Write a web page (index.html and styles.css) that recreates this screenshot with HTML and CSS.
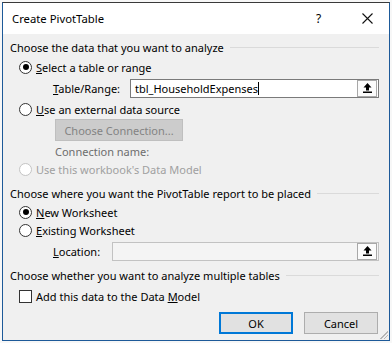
FILE: index.html
```html
<!DOCTYPE html>
<html lang="en">
<head>
    <meta charset="UTF-8">
    <title>Create PivotTable</title>
    <link rel="stylesheet" href="styles.css">
</head>
<body>
    <div class="dialog">
        <div class="title-bar">
            <span class="title">Create PivotTable</span>
            <span class="help">?</span>
            <span class="close">
                <svg width="11" height="11" viewBox="0 0 11 11"><path d="M0.5 0.5 L10.5 10.5 M10.5 0.5 L0.5 10.5" stroke="#111" stroke-width="1.1" fill="none"/></svg>
            </span>
        </div>
        <div class="dialog-body">
            <div class="section-head head-1"><span>Choose the data that you want to analyze</span><i class="rule"></i></div>

            <label class="option row-select">
                <span class="radio checked"></span>
                <span><u>S</u>elect a table or range</span>
            </label>
            <div class="field row-range">
                <span class="field-label"><u>T</u>able/Range:</span>
                <div class="ref-box">
                    <span class="ref-text">tbl_HouseholdExpenses</span><span class="caret"></span>
                    <span class="ref-btn">
                        <svg width="9" height="10" viewBox="0 0 9 10"><path d="M4.5 0 L0.5 4.5 H3 V7.5 H6 V4.5 H8.5 Z" fill="#000"/><rect x="0" y="8.5" width="9" height="1.5" fill="#000"/></svg>
                    </span>
                </div>
            </div>

            <label class="option row-external">
                <span class="radio"></span>
                <span><u>U</u>se an external data source</span>
            </label>
            <div class="indent">
                <button class="btn-disabled" type="button">Choose Connection...</button>
            </div>
            <div class="indent conn-name">Connection name:</div>
            <label class="option row-model disabled">
                <span class="radio"></span>
                <span>Use this workbook's Data Model</span>
            </label>

            <div class="section-head head-2"><span>Choose where you want the PivotTable report to be placed</span><i class="rule"></i></div>
            <label class="option row-new">
                <span class="radio checked"></span>
                <span><u>N</u>ew Worksheet</span>
            </label>
            <label class="option row-existing">
                <span class="radio"></span>
                <span><u>E</u>xisting Worksheet</span>
            </label>
            <div class="field row-location">
                <span class="field-label"><u>L</u>ocation:</span>
                <div class="ref-box inactive">
                    <span class="ref-text"></span>
                    <span class="ref-btn">
                        <svg width="9" height="10" viewBox="0 0 9 10"><path d="M4.5 0 L0.5 4.5 H3 V7.5 H6 V4.5 H8.5 Z" fill="#000"/><rect x="0" y="8.5" width="9" height="1.5" fill="#000"/></svg>
                    </span>
                </div>
            </div>

            <div class="section-head head-3"><span>Choose whether you want to analyze multiple tables</span><i class="rule"></i></div>
            <label class="option row-check">
                <span class="checkbox"></span>
                <span>Add this data to the Data <u>M</u>odel</span>
            </label>

            <div class="actions">
                <button class="btn btn-default" type="button">OK</button>
                <button class="btn" type="button">Cancel</button>
            </div>
        </div>
        <span class="grip"></span>
    </div>
</body>
</html>
```

FILE: styles.css
```css
body {
    margin: 0;
    padding: 2px;
    background: #f7f7f7;
    font-family: "Segoe UI", "Noto Sans", sans-serif;
    font-size: 11px;
    color: #000;
}

.dialog {
    position: relative;
    width: 386px;
    height: 337px;
    border: 1px solid #1d5a99;
    border-top-color: #3a3a3a;
    background: #f0f0f0;
    display: flex;
    flex-direction: column;
}

.title-bar {
    height: 31px;
    background: #fff;
    display: flex;
    align-items: center;
    padding-left: 9px;
}

    .title-bar .title {
        flex: 1;
        font-size: 11.3px;
    }

    .title-bar .help {
        width: 46px;
        font-size: 12px;
    }

    .title-bar .close {
        width: 27px;
        display: flex;
        align-items: center;
    }

.dialog-body {
    flex: 1;
    padding: 3px 7px 0 7px;
    display: flex;
    flex-direction: column;
}

.section-head {
    display: flex;
    align-items: center;
    height: 20px;
}

    .section-head .rule {
        flex: 1;
        height: 1px;
        background: #dadada;
        margin-left: 6px;
        margin-right: 3px;
    }

.head-2 {
    margin-top: 6px;
}

.head-3 {
    margin-top: 4px;
    height: 21px;
}

.option {
    display: flex;
    align-items: center;
    height: 20px;
    padding-left: 9px;
}

.row-model {
    height: 16px;
}

.row-new,
.row-existing {
    height: 18px;
}

.option.disabled {
    color: #a0a0a0;
}

.radio {
    width: 11px;
    height: 11px;
    border: 1px solid #333;
    border-radius: 50%;
    background: #fff;
    margin-right: 4px;
    position: relative;
}

    .radio.checked::after {
        content: "";
        position: absolute;
        left: 2.5px;
        top: 2.5px;
        width: 6px;
        height: 6px;
        border-radius: 50%;
        background: #000;
    }

.disabled .radio {
    border-color: #c4c4c4;
}

.checkbox {
    width: 11px;
    height: 11px;
    border: 1px solid #333;
    background: #fff;
    margin-right: 4px;
}

.field {
    display: flex;
    align-items: center;
    padding-left: 43px;
}

.row-range {
    height: 22px;
}

.row-location {
    height: 20px;
    margin-top: 2px;
}

.field-label {
    width: 77px;
}

.row-location .field-label {
    width: 59px;
}

.ref-box {
    flex: 1;
    height: 17px;
    border: 1px solid #7a7a7a;
    background: #fff;
    display: flex;
    align-items: center;
    margin-right: 3px;
    padding-left: 4px;
}

    .ref-box.inactive {
        border-color: #c2c2c2;
        background: #f4f4f4;
    }

.ref-text {
    white-space: nowrap;
}

.caret {
    width: 1px;
    height: 13px;
    background: #000;
}

.ref-btn {
    margin-left: auto;
    width: 18px;
    height: 15px;
    border: 1px solid #a8a8a8;
    background: #fbfbfb;
    display: flex;
    align-items: center;
    justify-content: center;
    margin-right: 1px;
}

.indent {
    padding-left: 45px;
}

.btn-disabled {
    width: 128px;
    height: 22px;
    border: 1px solid #bfbfbf;
    background: #cccccc;
    color: #838383;
    font-family: inherit;
    font-size: 11px;
    padding: 0;
}

.conn-name {
    height: 18px;
    line-height: 18px;
    color: #6d6d6d;
    margin-top: 2px;
}

.actions {
    display: flex;
    justify-content: flex-end;
    gap: 11px;
    margin-top: 6px;
    padding-right: 4px;
}

.btn {
    width: 74px;
    height: 22px;
    border: 1px solid #adadad;
    background: #e1e1e1;
    font-family: inherit;
    font-size: 11px;
    color: #000;
    padding: 0;
}

.btn-default {
    border: 2px solid #0078d7;
}

.grip {
    position: absolute;
    right: 1px;
    bottom: 1px;
    width: 9px;
    height: 9px;
    background: linear-gradient(135deg, transparent 55%, #b5b5b5 55%, #b5b5b5 62%, transparent 62%, transparent 75%, #b5b5b5 75%, #b5b5b5 82%, transparent 82%);
}
```
